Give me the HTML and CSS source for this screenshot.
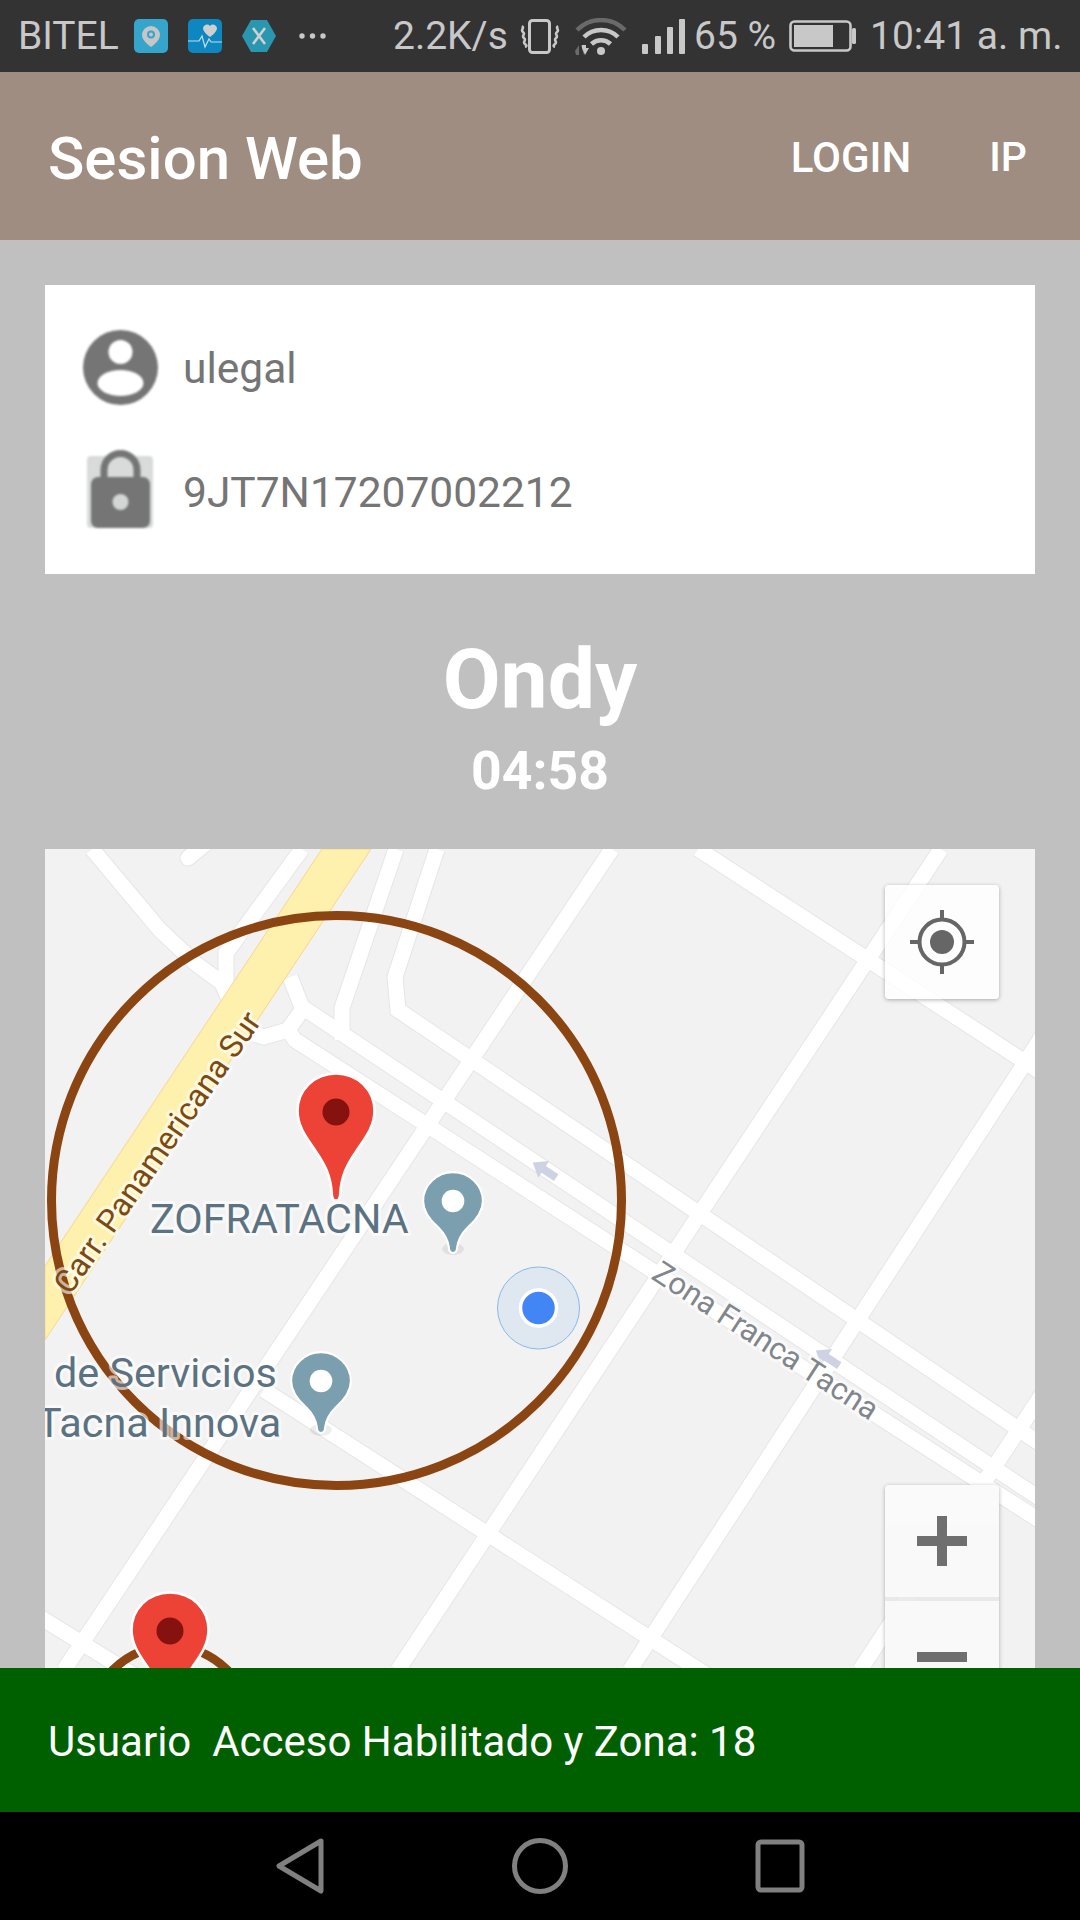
FILE: index.html
```html
<!DOCTYPE html>
<html lang="es">
<head>
<meta charset="utf-8">
<title>Sesion Web</title>
<link rel="stylesheet" href="styles.css">
</head>
<body>
<div class="phone">
  <div class="status">
    <span class="status-text carrier">BITEL</span>
    <svg class="ic ic-app1" viewBox="0 0 34 34"><rect width="34" height="34" rx="5" fill="#36a5cc"/><path d="M17 7a9 9 0 0 1 9 9c0 6-9 12-9 12s-9-6-9-12a9 9 0 0 1 9-9z" fill="#c6c6c6"/><circle cx="17" cy="15.500" r="4" fill="#36a5cc"/><circle cx="17" cy="15.500" r="2" fill="#c6c6c6"/></svg>
    <svg class="ic ic-app2" viewBox="0 0 34 34"><rect width="34" height="34" rx="5" fill="#0e87c0"/><path d="M22 18s-7-4.500-7-9a4 4 0 0 1 7-2 4 4 0 0 1 7 2c0 4.500-7 9-7 9z" fill="#cfcfcf"/><path d="M0 22h11l3-5 3 11 4-8 2 3h11" fill="none" stroke="#c6dce6" stroke-width="1.200"/></svg>
    <svg class="ic ic-app3" viewBox="0 0 34 32"><path d="M9 0h16l9 16-9 16H9L0 16z" fill="#2a97b0"/><path d="M11 8l12 16M23 8L11 24" stroke="#d0d0d0" stroke-width="2.600" fill="none"/></svg>
    <svg class="ic ic-dots" viewBox="0 0 28 6"><circle cx="3" cy="3" r="2.700" fill="#c8c8c8"/><circle cx="13.500" cy="3" r="2.700" fill="#c8c8c8"/><circle cx="24" cy="3" r="2.700" fill="#c8c8c8"/></svg>
    <span class="status-text speed">2.2K/s</span>
    <svg class="ic ic-vibrate" viewBox="0 0 40 35"><rect x="9.500" y="1.500" width="20" height="32" rx="3" fill="none" stroke="#c8c8c8" stroke-width="3"/><path d="M2 7c3 2-2 4 1 6s-2 4 1 6-2 4 1 6 0 3 0 3M38 7c-3 2 2 4-1 6s2 4-1 6 2 4-1 6 0 3 0 3" fill="none" stroke="#c8c8c8" stroke-width="2.600"/></svg>
    <svg class="ic ic-wifi" viewBox="0 0 52 37"><path d="M2 12a34 34 0 0 1 48 0" fill="none" stroke="#6a6a6a" stroke-width="4.500"/><path d="M9 19a24 24 0 0 1 34 0" fill="none" stroke="#c8c8c8" stroke-width="4.500"/><path d="M16.500 26a14 14 0 0 1 19 0" fill="none" stroke="#c8c8c8" stroke-width="4.500"/><circle cx="26" cy="33" r="4" fill="#c8c8c8"/><path d="M0 33l4-6v10H1zM6 27h5l-2 10z" fill="#6a6a6a"/><path d="M7 27h4v3l3 0-4 7-3-7z" fill="#c8c8c8"/></svg>
    <svg class="ic ic-signal" viewBox="0 0 43 35"><rect y="25" width="6" height="10" rx="1" fill="#c8c8c8"/><rect x="13" y="17" width="6" height="18" rx="1" fill="#c8c8c8"/><rect x="25" y="8" width="6" height="27" rx="1" fill="#c8c8c8"/><rect x="37" width="6" height="35" rx="1" fill="#c8c8c8"/></svg>
    <span class="status-text percent">65 %</span>
    <svg class="ic ic-battery" viewBox="0 0 67 32"><rect x="1.500" y="1.500" width="60" height="29" rx="4" fill="none" stroke="#c8c8c8" stroke-width="2.600"/><rect x="5" y="5" width="39" height="22" fill="#c8c8c8"/><rect x="63" y="8" width="4" height="16" rx="1.500" fill="#c8c8c8"/></svg>
    <span class="status-text clock">10:41 a. m.</span>
  </div>

  <header class="appbar">
    <h1 class="appbar-title">Sesion Web</h1>
    <span class="appbar-action action-login">LOGIN</span>
    <span class="appbar-action action-ip">IP</span>
  </header>

  <main class="content">
    <section class="card">
      <div class="card-row row-user">
        <svg class="row-icon icon-blur" width="75" height="75" viewBox="0 0 75 75"><circle cx="37.500" cy="37.500" r="37.500" fill="#757575"/><circle cx="37.500" cy="22" r="12" fill="#fff"/><ellipse cx="37.500" cy="53" rx="23" ry="13" fill="#fff"/></svg>
        <span class="row-text">ulegal</span>
      </div>
      <div class="card-row row-lock">
        <svg class="row-icon icon-blur" width="75" height="82" viewBox="0 0 75 82"><rect x="4" y="8" width="66" height="72" rx="4" fill="#d8dbda"/><path d="M21 32V22a16 16 0 0 1 33 0v10" fill="none" stroke="#757575" stroke-width="7"/><rect x="8" y="29" width="59" height="51" rx="7" fill="#757575"/><circle cx="37.500" cy="54" r="8" fill="#d4d6d5"/></svg>
        <span class="row-text">9JT7N17207002212</span>
      </div>
    </section>

    <div class="heading">
      <div class="heading-name">Ondy</div>
      <div class="heading-time">04:58</div>
    </div>

    <section class="map">
      <svg class="map-canvas" width="990" height="819" viewBox="45 849 990 819">
        <defs>
          <g id="roads">
            <path d="M612 849L64 1670"/>
            <path d="M941 849L398 1670"/>
            <path d="M1045 1032L630 1670"/>
            <path d="M1045 1390L860 1670"/>
            <path d="M302 849L226 953V987"/>
            <path d="M396 849L342 1008V1040"/>
            <path d="M437 849L395 977L398 1010L1045 1447"/>
            <path d="M92 849L160 930L195 963L222 983L228 997"/>
            <path d="M290 977L302 1007L1045 1502"/>
            <path d="M302 1010L288 1030L264 1037L240 1030"/>
            <path d="M288 1030L295 1040L1045 1524"/>
            <path d="M698 849L1045 1075"/>
            <path d="M264 1390L710 1677"/>
            <path d="M35 1614L135 1676"/>
            <path class="road-stub" d="M188 858L204 845"/>
          </g>
        </defs>
        <rect class="map-ground" x="45" y="849" width="990" height="819"/>
        <use href="#roads" class="road-casing"/>
        <use href="#roads" class="road-fill"/>
        <polygon class="highway" points="322,849 371,849 45,1340 45,1266"/>
        <path class="arrow" transform="translate(544.500 1170) rotate(33)" d="M-14 0L-1-10V-4H14V4H-1V10z"/>
        <path class="arrow" transform="translate(827.500 1358) rotate(33)" d="M-14 0L-1-10V-4H14V4H-1V10z"/>
        <circle class="geofence" cx="336.500" cy="1200.500" r="285"/>
        <circle class="geofence" cx="170" cy="1726" r="80"/>
        <text class="label label-road" transform="translate(70 1296) rotate(-55)">Carr. Panamericana Sur</text>
        <text class="label label-street" transform="translate(650 1278) rotate(33)">Zona Franca Tacna</text>
        <text class="label label-poi" x="150" y="1233">ZOFRATACNA</text>
        <text class="label label-poi" x="54" y="1387">de Servicios</text>
        <text class="label label-poi" x="37" y="1437">Tacna Innova</text>

        <ellipse class="pin-shadow" cx="453" cy="1249" rx="11" ry="6"/>
        <g transform="translate(453 1202) scale(1.03)">
          <path class="pin-teal" d="M0-29C16-29 29-16 29-1C29 10 22 18 14 25C8 31 5 37 4 44C4 48 2 49.500 0 49.500C-2 49.500-4 48-4 44C-5 37-8 31-14 25C-22 18-29 10-29-1C-29-16-16-29 0-29Z"/>
          <circle class="pin-teal-dot" r="11" cy="-1"/>
        </g>
        <ellipse class="pin-shadow" cx="321" cy="1430" rx="11" ry="6"/>
        <g transform="translate(321 1382) scale(1.03)">
          <path class="pin-teal" d="M0-29C16-29 29-16 29-1C29 10 22 18 14 25C8 31 5 37 4 44C4 48 2 49.500 0 49.500C-2 49.500-4 48-4 44C-5 37-8 31-14 25C-22 18-29 10-29-1C-29-16-16-29 0-29Z"/>
          <circle class="pin-teal-dot" r="11" cy="-1"/>
        </g>
        <g transform="translate(336 1112) scale(1.04)">
          <path class="pin-red" d="M0-37C21-37 37-21 37-1C37 14 28 25 20 37C11 50 5 61 4 79C4 84 2 85 0 85C-2 85-4 84-4 79C-5 61-11 50-20 37C-28 25-37 14-37-1C-37-21-21-37 0-37Z"/>
          <circle class="pin-red-dot" r="13"/>
        </g>
        <g transform="translate(170 1631) scale(1.04)">
          <path class="pin-red" d="M0-37C21-37 37-21 37-1C37 14 28 25 20 37C11 50 5 61 4 79C4 84 2 85 0 85C-2 85-4 84-4 79C-5 61-11 50-20 37C-28 25-37 14-37-1C-37-21-21-37 0-37Z"/>
          <circle class="pin-red-dot" r="13"/>
        </g>
        <circle class="me-halo" cx="538.500" cy="1308" r="41"/>
        <circle class="me-dot" cx="538.500" cy="1308" r="18"/>
      </svg>

      <div class="map-btn btn-locate">
        <svg width="66" height="66" viewBox="0 0 66 66"><circle cx="33" cy="33" r="22.500" fill="none" stroke="#666" stroke-width="4"/><circle cx="33" cy="33" r="12" fill="#666"/><path d="M33 1V11M33 55V65M1 33H11M55 33H65" stroke="#666" stroke-width="4" fill="none"/></svg>
      </div>
      <div class="zoom-group">
        <div class="map-btn-zoom">
          <svg width="50" height="50" viewBox="0 0 50 50"><path d="M20 0H30V20H50V30H30V50H20V30H0V20H20Z" fill="#666"/></svg>
        </div>
        <div class="map-btn-zoom">
          <svg width="50" height="10" viewBox="0 0 50 10"><rect width="50" height="10" fill="#666"/></svg>
        </div>
      </div>
    </section>
  </main>

  <div class="snack">Usuario  Acceso Habilitado y Zona: 18</div>

  <nav class="nav">
    <svg width="54" height="60" viewBox="0 0 54 60"><path d="M47 5L5 30L47 55Z" fill="none" stroke="#808080" stroke-width="5" stroke-linejoin="round"/></svg>
    <svg width="60" height="60" viewBox="0 0 60 60"><circle cx="30" cy="30" r="25.500" fill="none" stroke="#808080" stroke-width="5"/></svg>
    <svg width="50" height="54" viewBox="0 0 50 54"><rect x="3" y="3" width="44" height="48" rx="3" fill="none" stroke="#808080" stroke-width="5"/></svg>
  </nav>
</div>
</body>
</html>
```

FILE: styles.css
```css
* { box-sizing: border-box; }
html, body { margin: 0; padding: 0; background: #000; }
body { font-family: Roboto, "Liberation Sans", sans-serif; }

.phone {
  width: 1080px;
  height: 1920px;
  display: flex;
  flex-direction: column;
  overflow: hidden;
}

/* status bar */
.status {
  flex: 0 0 72px;
  height: 72px;
  background: #333;
  display: flex;
  align-items: center;
  position: relative;
}
.status-text { font-size: 39px; color: #c8c8c8; line-height: 1; white-space: nowrap; }
.ic { display: block; flex: none; }
.carrier { margin-left: 18px; width: 116px; }
.ic-app1 { width: 34px; height: 34px; }
.ic-app2 { width: 34px; height: 34px; margin-left: 20px; }
.ic-app3 { width: 34px; height: 32px; margin-left: 20px; }
.ic-dots { width: 28px; height: 6px; margin-left: 23px; }
.speed { margin-left: 66px; width: 127px; }
.ic-vibrate { width: 40px; height: 35px; }
.ic-wifi { width: 52px; height: 37px; margin-left: 15px; }
.ic-signal { width: 43px; height: 35px; margin-left: 15px; }
.percent { margin-left: 9px; width: 95px; }
.ic-battery { width: 67px; height: 32px; }
.clock { margin-left: 14px; }

/* app bar */
.appbar {
  flex: 0 0 168px;
  height: 168px;
  background: #9e8d80;
  display: flex;
  align-items: center;
  color: #fff;
  padding-left: 48px;
}
.appbar-title { margin: 5px 0 0; font-size: 60px; font-weight: 500; line-height: 1; flex: 1; }
.appbar-action { font-size: 42px; font-weight: 500; line-height: 1; margin-top: 3px; }
.action-login { margin-right: 78px; }
.action-ip { margin-right: 53px; font-size: 41px; }

/* content */
.content {
  flex: 1;
  min-height: 0;
  overflow: hidden;
  background: #c0c0c0;
  padding: 45px 45px 0;
}
.card {
  height: 289px;
  background: #fff;
  padding-top: 45px;
  padding-left: 38px;
}
.card-row { display: flex; align-items: center; }
.row-user { height: 75px; }
.row-lock { height: 82px; margin-top: 43px; }
.row-icon { flex: none; margin-right: 25px; }
.icon-blur { filter: blur(1px); }
.row-text { font-size: 42.500px; color: #757575; line-height: 1; }
.row-user .row-text { margin-top: 4px; }
.row-lock .row-text { margin-top: 9px; }

.heading {
  height: 275px;
  color: #fff;
  text-align: center;
  font-weight: 700;
  padding-top: 51px;
}
.heading-name { font-size: 84px; line-height: 110px; }
.heading-time { font-size: 53.500px; line-height: 62px; margin-top: 5px; }

/* map */
.map {
  position: relative;
  width: 990px;
  height: 819px;
  overflow: hidden;
}
.map-canvas { display: block; }
.map-ground { fill: #f2f2f2; }
.road-casing { fill: none; stroke: #e6e6e6; stroke-width: 17; }
.road-fill { fill: none; stroke: #fff; stroke-width: 15; }
.road-stub { stroke-linecap: round; }
.highway { fill: #fef0ad; stroke: #f8d78a; stroke-width: 1; }
.arrow { fill: #cfd2e2; }
.geofence { fill: none; stroke: #8b4513; stroke-width: 9; }
.label {
  font-family: Roboto, "Liberation Sans", sans-serif;
  paint-order: stroke;
  stroke: rgba(255, 255, 255, 0.6);
  stroke-width: 6px;
  stroke-linejoin: round;
}
.label-road { font-size: 32px; fill: #7a4a12; }
.label-street { font-size: 31px; fill: #80868b; }
.label-poi { font-size: 41.300px; fill: #5b7282; }
.pin-shadow { fill: rgba(0, 0, 0, 0.07); }
.pin-teal { fill: #7c9fb0; stroke: #fff; stroke-width: 2; }
.pin-teal-dot { fill: #fff; }
.pin-red { fill: #ec4336; stroke: #fff; stroke-width: 2.500; }
.pin-red-dot { fill: #861210; }
.me-halo { fill: #dfe8f0; stroke: #8ab8e8; stroke-width: 1; }
.me-dot { fill: #4285f4; stroke: #fff; stroke-width: 3.500; }

.map-btn {
  position: absolute;
  top: 36px;
  right: 36px;
  width: 114px;
  height: 114px;
  background: rgba(255, 255, 255, 0.8);
  border-radius: 4px;
  box-shadow: 0 1px 4px rgba(0, 0, 0, 0.3);
  display: flex;
  align-items: center;
  justify-content: center;
}
.zoom-group {
  position: absolute;
  top: 636px;
  right: 36px;
  width: 114px;
  border-radius: 4px;
  box-shadow: 0 1px 4px rgba(0, 0, 0, 0.3);
  display: flex;
  flex-direction: column;
  gap: 4px;
  background: rgba(230, 230, 230, 0.8);
  overflow: hidden;
}
.map-btn-zoom {
  height: 112px;
  background: #fbfbfb;
  opacity: 0.93;
  display: flex;
  align-items: center;
  justify-content: center;
}

/* snackbar */
.snack {
  flex: 0 0 144px;
  height: 144px;
  background: #006000;
  color: #fff;
  font-size: 42px;
  line-height: 148px;
  padding-left: 48px;
  white-space: pre;
}

/* nav */
.nav {
  flex: 0 0 108px;
  height: 108px;
  background: #000;
  display: flex;
  align-items: center;
  padding: 0 0 0 274px;
  gap: 0;
}
.nav svg:nth-child(2) { margin-left: 182px; }
.nav svg:nth-child(3) { margin-left: 185px; }
```
